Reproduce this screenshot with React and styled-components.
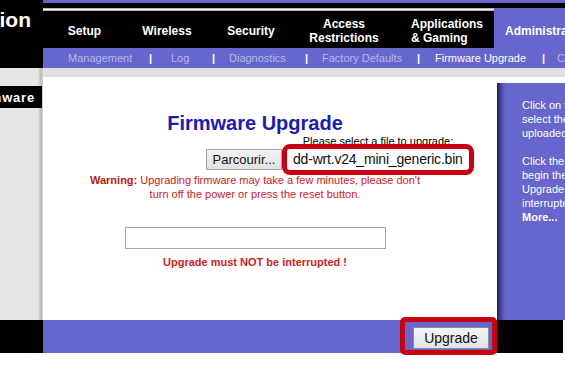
import React from "react";
import styled, {createGlobalStyle} from "styled-components";

const tabs = [
    {lines: ["Setup"]},
    {lines: ["Wireless"]},
    {lines: ["Security"]},
    {lines: ["Access", "Restrictions"]},
    {lines: ["Applications", "& Gaming"], left: true},
];

const sub_tabs = ["Management", "Log", "Diagnostics", "Factory Defaults", "Firmware Upgrade", "Config Management"];
const active_sub = "Firmware Upgrade";

const help_lines = [
    "Click on the Browse button to",
    "select the firmware file to be",
    "uploaded to the router.",
    "",
    "Click the Upgrade button to",
    "begin the upgrade process.",
    "Upgrade must not be",
    "interrupted.",
];

function App(){
    return <>
        <GlobalStyle/>
        <Page>
            <Header>
                <Brand><span>Administration</span></Brand>
                <HeadRight>
                    <TopStrip/>
                    <BlackStrip/>
                    <NavRow>
                        <MainTabs>
                            <GrayLine/>
                            <TabGrid>
                                {tabs.map(tab =>
                                    <Tab key={tab.lines[0]} $left={tab.left}>
                                        {tab.lines.map(line => <div key={line}>{line}</div>)}
                                    </Tab>
                                )}
                            </TabGrid>
                        </MainTabs>
                        <ActiveTab>Administration</ActiveTab>
                    </NavRow>
                    <SubNav>
                        {sub_tabs.map((item, i) =>
                            <React.Fragment key={item}>
                                {i > 0 && <Pipe>|</Pipe>}
                                <SubItem $active={item === active_sub}>{item}</SubItem>
                            </React.Fragment>
                        )}
                    </SubNav>
                </HeadRight>
            </Header>
            <Main>
                <LeftCol>
                    <SectionTab><span>Firmware</span></SectionTab>
                </LeftCol>
                <MainRight>
                    <GrayBand/>
                    <Body>
                        <Content>
                            <Title>Firmware Upgrade</Title>
                            <FileRow>
                                <BrowseButton>Parcourir...</BrowseButton>
                                <FileGroup>
                                    <FileLabel>Please select a file to upgrade:</FileLabel>
                                    <FileBox>dd-wrt.v24_mini_generic.bin</FileBox>
                                </FileGroup>
                            </FileRow>
                            <Warning>
                                <b>Warning:</b> Upgrading firmware may take a few minutes, please don't<br/>
                                turn off the power or press the reset button.
                            </Warning>
                            <ProgressBox/>
                            <Notice>Upgrade must NOT be interrupted !</Notice>
                        </Content>
                        <Side>
                            <HelpPanel>
                                {help_lines.map((line, i) =>
                                    <HelpLine key={i}>{line || "\u00a0"}</HelpLine>
                                )}
                                <HelpLine $bold>More...</HelpLine>
                            </HelpPanel>
                        </Side>
                    </Body>
                </MainRight>
            </Main>
            <Footer>
                <FootBlack $width={43}/>
                <ActionBar>
                    <UpgradeButton>Upgrade</UpgradeButton>
                </ActionBar>
                <FootBlack $width={66}/>
            </Footer>
        </Page>
    </>;
}

const purple = "#6666cc";
const highlight = "#c8000f";

const GlobalStyle = createGlobalStyle`
    body{
        margin: 0;
        background: #fff;
        font-family: "Liberation Sans", Arial, sans-serif;
    }
`;

const Page = styled.div`
    width: 565px;
    height: 365px;
    overflow: hidden;
    display: flex;
    flex-direction: column;
    background: #fff;
`;

const Header = styled.div`
    height: 68px;
    flex-shrink: 0;
    display: flex;
`;

const Brand = styled.div`
    width: 43px;
    flex-shrink: 0;
    background: #000;
    overflow: hidden;
    display: flex;
    justify-content: flex-end;
    padding-right: 12px;
    box-sizing: border-box;
    span{
        white-space: nowrap;
        color: #fff;
        font-weight: bold;
        font-size: 21px;
        line-height: 24px;
        margin-top: 8px;
    }
`;

const HeadRight = styled.div`
    flex: 1;
    min-width: 0;
    display: flex;
    flex-direction: column;
`;

const TopStrip = styled.div`
    height: 3px;
    background: ${purple};
`;

const BlackStrip = styled.div`
    height: 5px;
    background: #000;
`;

const NavRow = styled.div`
    height: 40px;
    display: flex;
`;

const MainTabs = styled.div`
    width: 451px;
    flex-shrink: 0;
    display: flex;
    flex-direction: column;
`;

const GrayLine = styled.div`
    height: 3px;
    background: linear-gradient(#9a9a9a, #f0f0f0 50%, #9a9a9a);
`;

const TabGrid = styled.div`
    flex: 1;
    background: #000;
    display: grid;
    grid-template-columns: 83px 82px 86px 100px 100px;
    padding-top: 2px;
`;

const Tab = styled.div`
    display: flex;
    flex-direction: column;
    justify-content: center;
    align-items: ${props => props.$left ? "flex-start" : "center"};
    padding-left: ${props => props.$left ? "17px" : "0"};
    color: #fff;
    font-weight: bold;
    font-size: 12px;
    line-height: 14px;
    white-space: nowrap;
`;

const ActiveTab = styled.div`
    flex: 1;
    min-width: 0;
    background: ${purple};
    color: #fff;
    font-weight: bold;
    font-size: 12px;
    line-height: 14px;
    white-space: nowrap;
    overflow: hidden;
    padding: 16px 0 0 11px;
`;

const SubNav = styled.div`
    height: 20px;
    background: ${purple};
    display: grid;
    grid-template-columns: 81px 22px 41px 17px 76px 17px 95px 18px 107px 15px auto;
    align-items: center;
    padding-left: 25px;
    font-size: 11px;
    white-space: nowrap;
    overflow: hidden;
`;

const SubItem = styled.span`
    color: ${props => props.$active ? "#fff" : "#b6b6ea"};
`;

const Pipe = styled.span`
    color: #fff;
    font-weight: bold;
`;

const Main = styled.div`
    height: 252px;
    flex-shrink: 0;
    display: flex;
`;

const LeftCol = styled.div`
    width: 43px;
    flex-shrink: 0;
    background: linear-gradient(to right, #e6e6e4 0, #e6e6e4 38px, #b8b8b8 41px, #d8d8d8 43px);
    display: flex;
    flex-direction: column;
`;

const SectionTab = styled.div`
    margin-top: 18px;
    height: 22px;
    width: 42px;
    background: #000;
    overflow: hidden;
    display: flex;
    justify-content: flex-end;
    align-items: center;
    padding-right: 7px;
    box-sizing: border-box;
    span{
        color: #fff;
        font-weight: bold;
        font-size: 13px;
        letter-spacing: 0.8px;
        white-space: nowrap;
    }
`;

const MainRight = styled.div`
    flex: 1;
    min-width: 0;
    display: flex;
    flex-direction: column;
`;

const GrayBand = styled.div`
    height: 9px;
    background: #e0e0e0;
`;

const Body = styled.div`
    flex: 1;
    display: flex;
`;

const Content = styled.div`
    flex: 1;
    min-width: 0;
    background: #fff;
    padding-right: 30px;
    display: flex;
    flex-direction: column;
    align-items: center;
`;

const Title = styled.div`
    margin-top: 34px;
    color: #1a1ab4;
    font-weight: bold;
    font-size: 20px;
    line-height: 24px;
    white-space: nowrap;
`;

const FileRow = styled.div`
    align-self: stretch;
    display: flex;
    align-items: flex-end;
    padding-left: 163px;
`;

const BrowseButton = styled.div`
    width: 76px;
    height: 21px;
    flex-shrink: 0;
    box-sizing: border-box;
    border: 1px solid #a2a2a2;
    background: linear-gradient(#f2f2f2, #e2e2e2);
    font-size: 13px;
    line-height: 19px;
    text-align: center;
    color: #111;
`;

const FileGroup = styled.div`
    margin-left: 5px;
    display: flex;
    flex-direction: column;
    align-items: center;
`;

const FileLabel = styled.div`
    font-size: 11px;
    line-height: 13px;
    white-space: nowrap;
    margin-bottom: 1px;
`;

const FileBox = styled.div`
    width: 182px;
    height: 21px;
    box-sizing: border-box;
    padding-left: 6px;
    background: #fff;
    outline: 5px solid ${highlight};
    border-radius: 3px;
    font-size: 14px;
    letter-spacing: -0.2px;
    line-height: 21px;
    white-space: nowrap;
    color: #111;
`;

const Warning = styled.div`
    margin-top: 3px;
    color: #cc2222;
    font-size: 11px;
    line-height: 14px;
    text-align: center;
    white-space: nowrap;
    b{
        color: #bb1818;
    }
`;

const ProgressBox = styled.div`
    margin-top: 26px;
    width: 261px;
    height: 22px;
    box-sizing: border-box;
    border: 1px solid #a8a8a8;
    background: #fff;
`;

const Notice = styled.div`
    margin-top: 6px;
    color: #cc2222;
    font-weight: bold;
    font-size: 11px;
    line-height: 14px;
    white-space: nowrap;
`;

const Side = styled.div`
    width: 68px;
    flex-shrink: 0;
    background: #fff;
    padding-top: 6px;
    display: flex;
    flex-direction: column;
`;

const HelpPanel = styled.div`
    flex: 1;
    background: linear-gradient(to right, #1c1c4c 0, #3c3c90 3px, #5a5abc 6px, ${purple} 9px);
    padding: 15px 0 0 25px;
    overflow: hidden;
`;

const HelpLine = styled.div`
    color: #fff;
    font-size: 11px;
    line-height: 14px;
    white-space: nowrap;
    font-weight: ${props => props.$bold ? "bold" : "normal"};
`;

const Footer = styled.div`
    height: 33px;
    flex-shrink: 0;
    display: flex;
`;

const FootBlack = styled.div`
    width: ${props => props.$width}px;
    flex-shrink: 0;
    background: #000;
`;

const ActionBar = styled.div`
    width: 454px;
    flex-shrink: 0;
    background: ${purple};
    display: flex;
    justify-content: flex-end;
    align-items: flex-start;
    padding: 7px 8px 0 0;
    box-sizing: border-box;
`;

const UpgradeButton = styled.div`
    position: relative;
    width: 76px;
    height: 22px;
    box-sizing: border-box;
    border: 1px solid #8a8aa0;
    background: linear-gradient(#f4f4f4, #e4e4e4);
    font-size: 14px;
    line-height: 20px;
    text-align: center;
    color: #111;
    &::after{
        content: "";
        position: absolute;
        top: -11px;
        left: -14px;
        right: -9px;
        bottom: -7px;
        border: 5px solid ${highlight};
        border-radius: 5px;
    }
`;

export default App;
